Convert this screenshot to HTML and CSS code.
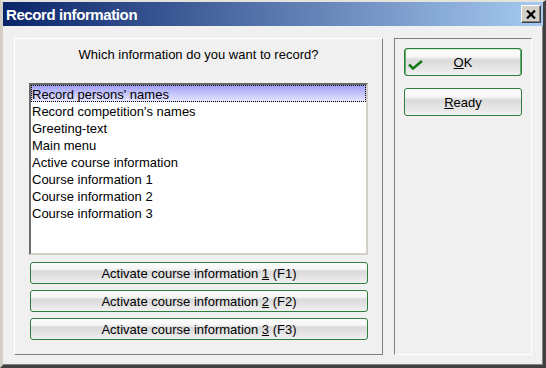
FILE: index.html
```html
<!DOCTYPE html>
<html lang="en">
<head>
  <meta charset="UTF-8">
  <title>Record information</title>
  <link rel="stylesheet" href="styles.css">
</head>
<body>

  <div class="window">
    <div class="titlebar">
      <span class="title">Record information</span>
      <button class="close-btn" type="button">
        <svg width="10" height="9" viewBox="0 0 10 9">
          <path d="M1 0.5 L9 8.5 M9 0.5 L1 8.5" stroke="#000" stroke-width="2.2" fill="none"/>
        </svg>
      </button>
    </div>

    <div class="content">
      <div class="panel-left">
        <p class="question">Which information do you want to record?</p>
        <ul class="listbox">
          <li class="selected">Record persons' names</li>
          <li>Record competition's names</li>
          <li>Greeting-text</li>
          <li>Main menu</li>
          <li>Active course information</li>
          <li>Course information 1</li>
          <li>Course information 2</li>
          <li>Course information 3</li>
        </ul>
        <div class="activate-buttons">
          <button class="green-btn" type="button">Activate course information <u>1</u> (F1)</button>
          <button class="green-btn" type="button">Activate course information <u>2</u> (F2)</button>
          <button class="green-btn" type="button">Activate course information <u>3</u> (F3)</button>
        </div>
      </div>

      <div class="panel-right">
        <button class="green-btn big default" type="button">
          <svg class="check" width="15" height="10" viewBox="0 0 15 10">
            <path d="M1 4.5 L5 8.5 L14 1" stroke="#1a7a1a" stroke-width="2.6" fill="none"/>
          </svg>
          <span><u>O</u>K</span>
        </button>
        <button class="green-btn big" type="button"><u>R</u>eady</button>
      </div>
    </div>
  </div>

</body>
</html>
```

FILE: styles.css
```css
* {
  margin: 0;
  padding: 0;
  box-sizing: border-box;
  font-family: 'Liberation Sans', Arial, sans-serif;
}

body {
  width: 546px;
  height: 368px;
  overflow: hidden;
  background: #d4d0c8;
}

.window {
  width: 546px;
  height: 368px;
  display: flex;
  flex-direction: column;
  background: #f0f0f0;
  border-style: solid;
  border-width: 2px 3px 3px 3px;
  border-color: #e6e3dc #404040 #404040 #d4d0c8;
  box-shadow: inset -1px -1px 0 #808080;
}

.titlebar {
  height: 24px;
  flex: none;
  display: flex;
  align-items: center;
  justify-content: space-between;
  padding-left: 3px;
  padding-right: 2px;
  background: linear-gradient(to right, #0a246a, #a6caf0);
}

.title {
  color: #fff;
  font-size: 15px;
  font-weight: 700;
  letter-spacing: -0.4px;
}

.close-btn {
  width: 20px;
  height: 18px;
  display: flex;
  align-items: center;
  justify-content: center;
  background: #d4d0c8;
  border: 1px solid;
  border-color: #fff #404040 #404040 #fff;
  box-shadow: inset -1px -1px 0 #808080;
}

.content {
  flex: 1;
  display: flex;
  gap: 11px;
  padding: 12px 11px 10px 11px;
}

/* left area */
.panel-left {
  width: 369px;
  display: flex;
  flex-direction: column;
  border: 1px solid;
  border-color: #fff #808080 #808080 #fff;
  padding: 8px 14px 0 14px;
}

.question {
  font-size: 13px;
  line-height: 16px;
  color: #000;
  text-align: center;
}

.listbox {
  list-style: none;
  margin-top: 20px;
  height: 172px;
  background: #fff;
  border: 2px solid;
  border-color: #696969 #d4d0c8 #d4d0c8 #696969;
}

.listbox li {
  height: 17px;
  line-height: 15px;
  padding-top: 2px;
  font-size: 13px;
  color: #000;
  padding-left: 1px;
  white-space: nowrap;
}

.listbox li.selected {
  background: linear-gradient(to bottom, #9f9ff7, #e9e9ff);
  outline: 1px dotted #000;
  outline-offset: -1px;
}

.activate-buttons {
  display: flex;
  flex-direction: column;
  gap: 6px;
  margin-top: 7px;
  padding-left: 1px;
}

.green-btn {
  height: 22px;
  border: 1px solid #2e7d3c;
  border-radius: 3px;
  background: linear-gradient(to bottom, #fdfdfd 0%, #f6f6f6 30%, #dadada 42%, #e4e4e4 70%, #f0f0f0 100%);
  font-size: 13px;
  color: #000;
  text-align: center;
}

/* right area */
.panel-right {
  flex: 1;
  display: flex;
  flex-direction: column;
  gap: 12px;
  border: 1px solid;
  border-color: #808080 #fff #fff #808080;
  padding: 9px 9px 0 9px;
}

.green-btn.big {
  height: 28px;
}

.green-btn.default {
  position: relative;
  box-shadow: inset 1px 0 0 #5fae6b, inset -1px 0 0 #5fae6b, inset 0 1px 0 #cfe9d3;
}

.check {
  position: absolute;
  left: 3px;
  top: 11px;
}
```
